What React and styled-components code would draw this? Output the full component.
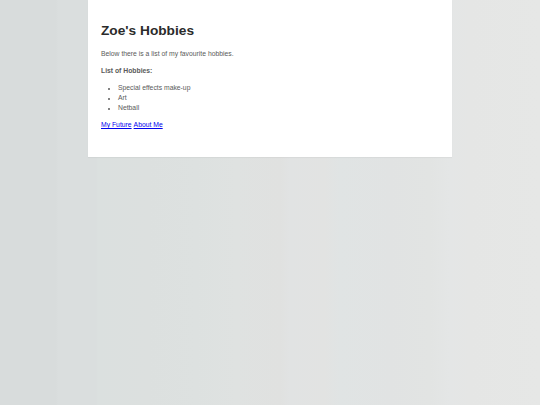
import React from "react"
import styled, { createGlobalStyle } from "styled-components"

const GlobalStyle = createGlobalStyle`
  html, body {
    margin: 0;
    padding: 0;
    height: 100%;
  }
  body {
    font-family: "Liberation Sans", Arial, sans-serif;
    background: linear-gradient(
      90deg,
      #d8dcdc 0px,
      #d8dcdc 56px,
      #dadede 58px,
      #dadede 96px,
      #dbe0df 98px,
      #dce0df 148px,
      #dde1e0 196px,
      #dfe2e1 236px,
      #e0e1e0 280px,
      #e1e3e3 290px,
      #e2e3e2 325px,
      #e0e4e4 340px,
      #e1e3e3 390px,
      #e2e4e3 430px,
      #e4e6e6 450px,
      #e5e6e5 470px,
      #e6e7e6 540px
    );
    min-height: 405px;
  }
`

const Page = styled.div`
  width: 364px;
  margin: 0 auto;
  background: #fff;
  padding: 14px 13px 27px;
  box-sizing: border-box;
  box-shadow: 0 1px 1px rgba(0, 0, 0, 0.04);
`

const Title = styled.h1`
  font-size: 13.7px;
  line-height: 16px;
  font-weight: bold;
  color: #2b2b2b;
  margin: 9px 0 10px;
`

const Text = styled.p`
  font-size: 6.8px;
  line-height: 10px;
  color: #5a5a5a;
  margin: 0 0 7px;
  font-weight: ${p => (p.$bold ? "bold" : "normal")};
`

const List = styled.ul`
  margin: 0 0 7px;
  padding-left: 17px;
  font-size: 6.8px;
  line-height: 10px;
  color: #5a5a5a;

  li::marker {
    font-size: 5px;
  }
`

const Links = styled.div`
  font-size: 6.8px;
  line-height: 10px;

  a {
    color: #0000ee;
    margin-right: 2px;
  }
`

export default function App() {
  return (
    <>
      <GlobalStyle />
      <Page>
        <Title>Zoe's Hobbies</Title>
        <Text>Below there is a list of my favourite hobbies.</Text>
        <Text $bold>List of Hobbies:</Text>
        <List>
          <li>Special effects make-up</li>
          <li>Art</li>
          <li>Netball</li>
        </List>
        <Links>
          <a href="#future">My Future</a>
          <a href="#about">About Me</a>
        </Links>
      </Page>
    </>
  )
}
